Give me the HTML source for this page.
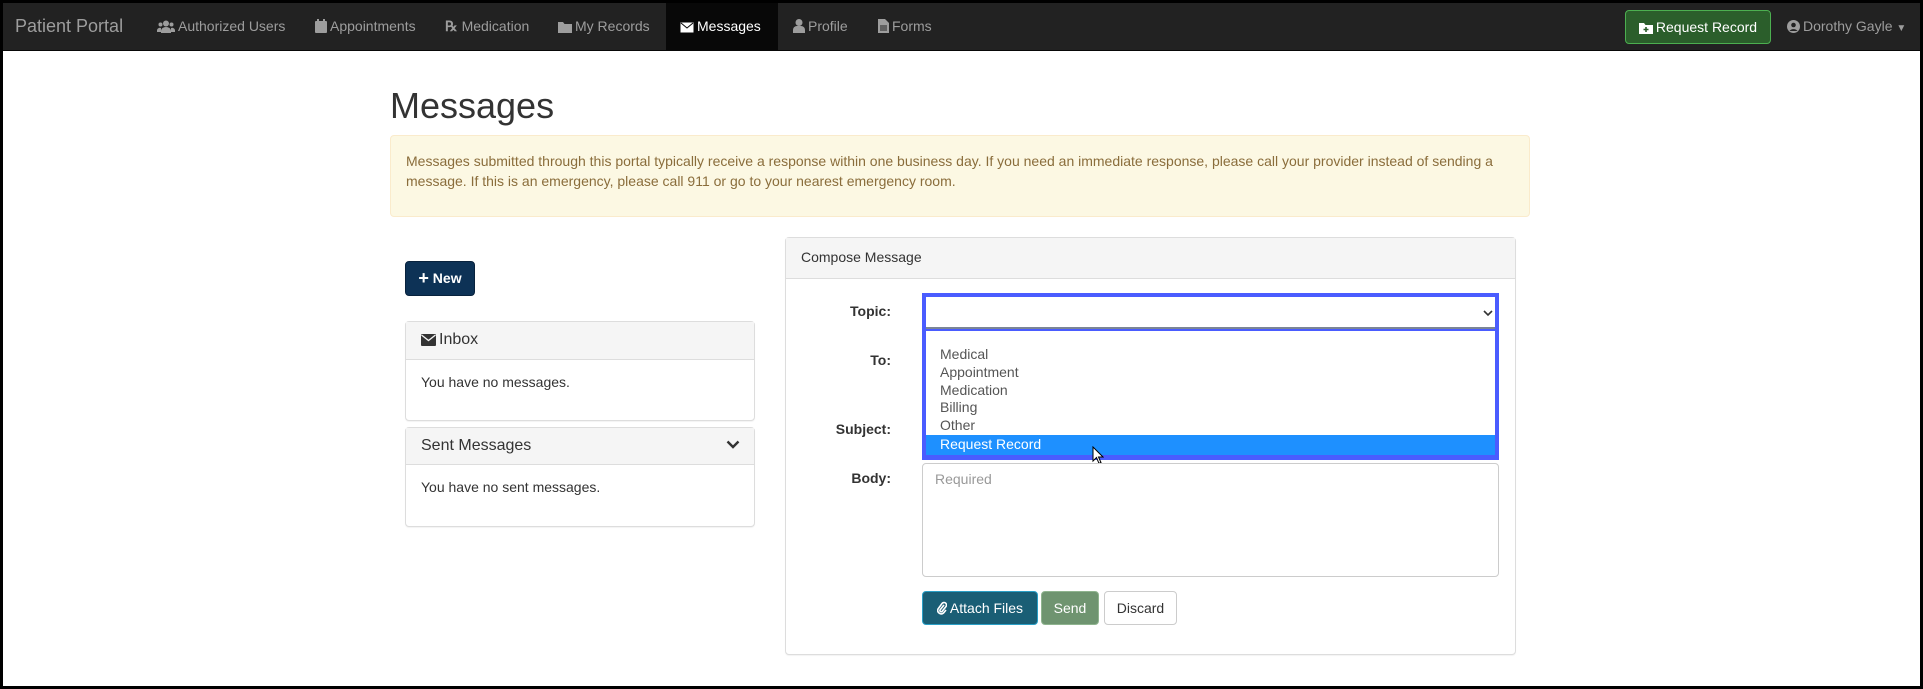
<!DOCTYPE html>
<html><head><meta charset="utf-8"><style>
*{box-sizing:border-box;margin:0;padding:0}
body{width:1923px;height:689px;overflow:hidden;background:#000;font-family:"Liberation Sans",Arial,sans-serif;font-size:14px;color:#333;position:relative}
.page{position:absolute;left:3px;top:3px;width:1917px;height:683px;background:#fff}
.nav{position:absolute;left:0;top:0;width:1917px;height:48px;background:#222;border-bottom:1px solid #080808}
.nav .it{position:absolute;top:-1px;height:48px;line-height:48px;color:#9d9d9d;font-size:14px;white-space:nowrap}
.nav .brand{font-size:18px;color:#9d9d9d}
.nav .act{background:#080808;color:#fff;padding:0 15px;top:0;line-height:46px}
.abs{position:absolute}
.ico{display:inline-block;vertical-align:-2px;margin-right:3px}
h1{position:absolute;left:387px;top:82px;font-size:36px;font-weight:500;color:#333}
.alert{position:absolute;left:387px;top:132px;width:1140px;height:82px;background:#fcf8e3;border:1px solid #faebcc;border-radius:4px;color:#8a6d3b;padding:15px 15px;line-height:20px}
.panel{position:absolute;border:1px solid #ddd;border-radius:4px;background:#fff;box-shadow:0 1px 1px rgba(0,0,0,.05)}
.ph{background:#f5f5f5;border-bottom:1px solid #ddd;padding:0 15px}
.btn{position:absolute;border-radius:4px;font-size:14px;text-align:center;white-space:nowrap}
.lbl{position:absolute;font-weight:bold;text-align:right;width:100px}
</style></head><body>
<div class="page">
<div class="nav">
 <div class="it brand" style="left:12px">Patient Portal</div>
 <div class="it" style="left:154px"><svg class="ico" width="18" height="13" viewBox="0 0 18 13" fill="#9d9d9d"><circle cx="9" cy="3.5" r="3"/><circle cx="3.5" cy="4.5" r="2"/><circle cx="14.5" cy="4.5" r="2"/><path d="M4 13v-2a5 4 0 0 1 10 0v2z"/><path d="M0 12v-2a3 3 0 0 1 4-2v4z"/><path d="M18 12v-2a3 3 0 0 0-4-2v4z"/></svg>Authorized Users</div>
 <div class="it" style="left:312px"><svg class="ico" width="12" height="14" viewBox="0 0 12 14" fill="#9d9d9d"><rect x="2" y="0" width="2" height="3"/><rect x="8" y="0" width="2" height="3"/><rect x="0" y="2" width="12" height="12" rx="1"/></svg>Appointments</div>
 <div class="it" style="left:442px"><b style="font-family:'Liberation Serif',serif;font-weight:bold;margin-right:4px">℞</b>Medication</div>
 <div class="it" style="left:555px"><svg class="ico" width="14" height="12" viewBox="0 0 14 12" fill="#9d9d9d"><path d="M0 1h5l1.5 2H14v9H0z"/></svg>My Records</div>
 <div class="it act" style="left:663px;width:112px;padding-left:14px"><svg class="ico" width="14" height="11" viewBox="0 0 14 11"><rect x="0.5" y="0.5" width="13" height="10" fill="#fff"/><path d="M1 1l6 5 6-5" stroke="#080808" fill="none"/></svg>Messages</div>
 <div class="it" style="left:790px"><svg class="ico" width="12" height="14" viewBox="0 0 12 14" fill="#9d9d9d"><circle cx="6" cy="3.5" r="3.5"/><path d="M0 14v-3a4 4 0 0 1 4-4h4a4 4 0 0 1 4 4v3z"/></svg>Profile</div>
 <div class="it" style="left:875px"><svg class="ico" width="11" height="14" viewBox="0 0 11 14" fill="#9d9d9d"><path d="M0 0h7l4 4v10H0z"/><path d="M2 7h7M2 9h7M2 11h7" stroke="#222"/></svg>Forms</div>
 <div class="btn" style="left:1622px;top:7px;width:146px;height:34px;line-height:32px;background:#2b5e2b;border:1px solid #4caf50;color:#fff"><svg class="ico" width="14" height="12" viewBox="0 0 14 12"><path d="M0 1h5l1.5 2H14v9H0z" fill="#fff"/><path d="M7 5v5M4.5 7.5h5" stroke="#2b5e2b" stroke-width="1.6"/></svg>Request Record</div>
 <div class="it" style="left:1784px"><svg class="ico" width="13" height="13" viewBox="0 0 13 13"><circle cx="6.5" cy="6.5" r="6.5" fill="#9d9d9d"/><circle cx="6.5" cy="5" r="2.3" fill="#222"/><path d="M2.5 11a4.5 3.5 0 0 1 8 0" fill="#222"/></svg>Dorothy Gayle <span style="font-size:10px">▼</span></div>
</div>

<h1>Messages</h1>
<div class="alert">Messages submitted through this portal typically receive a response within one business day. If you need an immediate response, please call your provider instead of sending a message. If this is an emergency, please call 911 or go to your nearest emergency room.</div>

<div class="btn" style="left:402px;top:258px;width:70px;height:35px;line-height:33px;background:#0d3256;border:1px solid #08223d;color:#fff;font-weight:bold"><span style="font-size:18px;vertical-align:-1px">+</span> New</div>

<div class="panel" style="left:402px;top:318px;width:350px;height:100px">
 <div class="ph" style="height:38px;line-height:36px;font-size:16px"><svg class="ico" width="15" height="12" viewBox="0 0 15 12"><rect width="15" height="12" rx="1" fill="#333"/><path d="M0.5 1l7 5.5 7-5.5" stroke="#f5f5f5" fill="none" stroke-width="1.3"/></svg>Inbox</div>
 <div style="padding:14px 15px">You have no messages.</div>
</div>
<div class="panel" style="left:402px;top:424px;width:350px;height:100px">
 <div class="ph" style="height:37px;line-height:35px;font-size:16px">Sent Messages<svg style="position:absolute;right:14px;top:12px" width="14" height="10" viewBox="0 0 14 10"><path d="M1.5 1.5l5.5 5.5 5.5-5.5" stroke="#333" stroke-width="2.4" fill="none"/></svg></div>
 <div style="padding:14px 15px">You have no sent messages.</div>
</div>

<div class="panel" style="left:782px;top:234px;width:731px;height:418px">
 <div class="ph" style="height:41px;line-height:39px">Compose Message</div>
</div>
<div class="lbl" style="left:788px;top:300px">Topic:</div>
<div class="lbl" style="left:788px;top:349px">To:</div>
<div class="lbl" style="left:788px;top:418px">Subject:</div>
<div class="lbl" style="left:788px;top:467px">Body:</div>

<div class="abs" style="left:919px;top:290px;width:577px;height:167px;background:#4a5cff"></div>
<div class="abs" style="left:923px;top:294px;width:569px;height:32px;background:#fff;border-bottom:2px solid #7a8596"></div>
<svg class="abs" style="left:1480px;top:306px" width="10" height="8" viewBox="0 0 10 8"><path d="M1 2l4 4 4-4" stroke="#333" stroke-width="1.6" fill="none"/></svg>
<div class="abs" style="left:923px;top:328px;width:569px;height:124px;background:#fff;font-size:14px;line-height:17.8px;color:#555">
 <div style="height:15px"></div>
 <div style="padding-left:14px">Medical</div>
 <div style="padding-left:14px">Appointment</div>
 <div style="padding-left:14px">Medication</div>
 <div style="padding-left:14px">Billing</div>
 <div style="padding-left:14px">Other</div>
 <div style="padding-left:14px;background:#1e90ff;color:#fff;height:20px;line-height:18px">Request Record</div>
</div>
<svg class="abs" style="left:1089px;top:443px" width="12" height="19" viewBox="0 0 12 19"><path d="M1 1v14l3.5-3.5 2.5 6 2-1-2.5-5.5H11z" fill="#fff" stroke="#000"/></svg>

<div class="abs" style="left:919px;top:460px;width:577px;height:114px;border:1px solid #ccc;border-radius:4px;padding:7px 12px;color:#999">Required</div>

<div class="btn" style="left:919px;top:588px;width:116px;height:34px;line-height:32px;background:#1a5e75;border:1px solid #2a9fc6;color:#fff"><svg class="ico" width="10" height="14" viewBox="0 0 10 14"><path d="M7 4L3 9a1.3 1.3 0 0 0 2 1.5L9 5.5a2.5 2.5 0 0 0-4-3L1 8a3.5 3.5 0 0 0 5.5 4L9 9" stroke="#fff" stroke-width="1.6" fill="none"/></svg>Attach Files</div>
<div class="btn" style="left:1038px;top:588px;width:58px;height:34px;line-height:32px;background:#6f9470;border:1px solid #8fb48f;color:#fff">Send</div>
<div class="btn" style="left:1101px;top:588px;width:73px;height:34px;line-height:32px;background:#fff;border:1px solid #ccc;color:#333">Discard</div>
</div>
</body></html>
